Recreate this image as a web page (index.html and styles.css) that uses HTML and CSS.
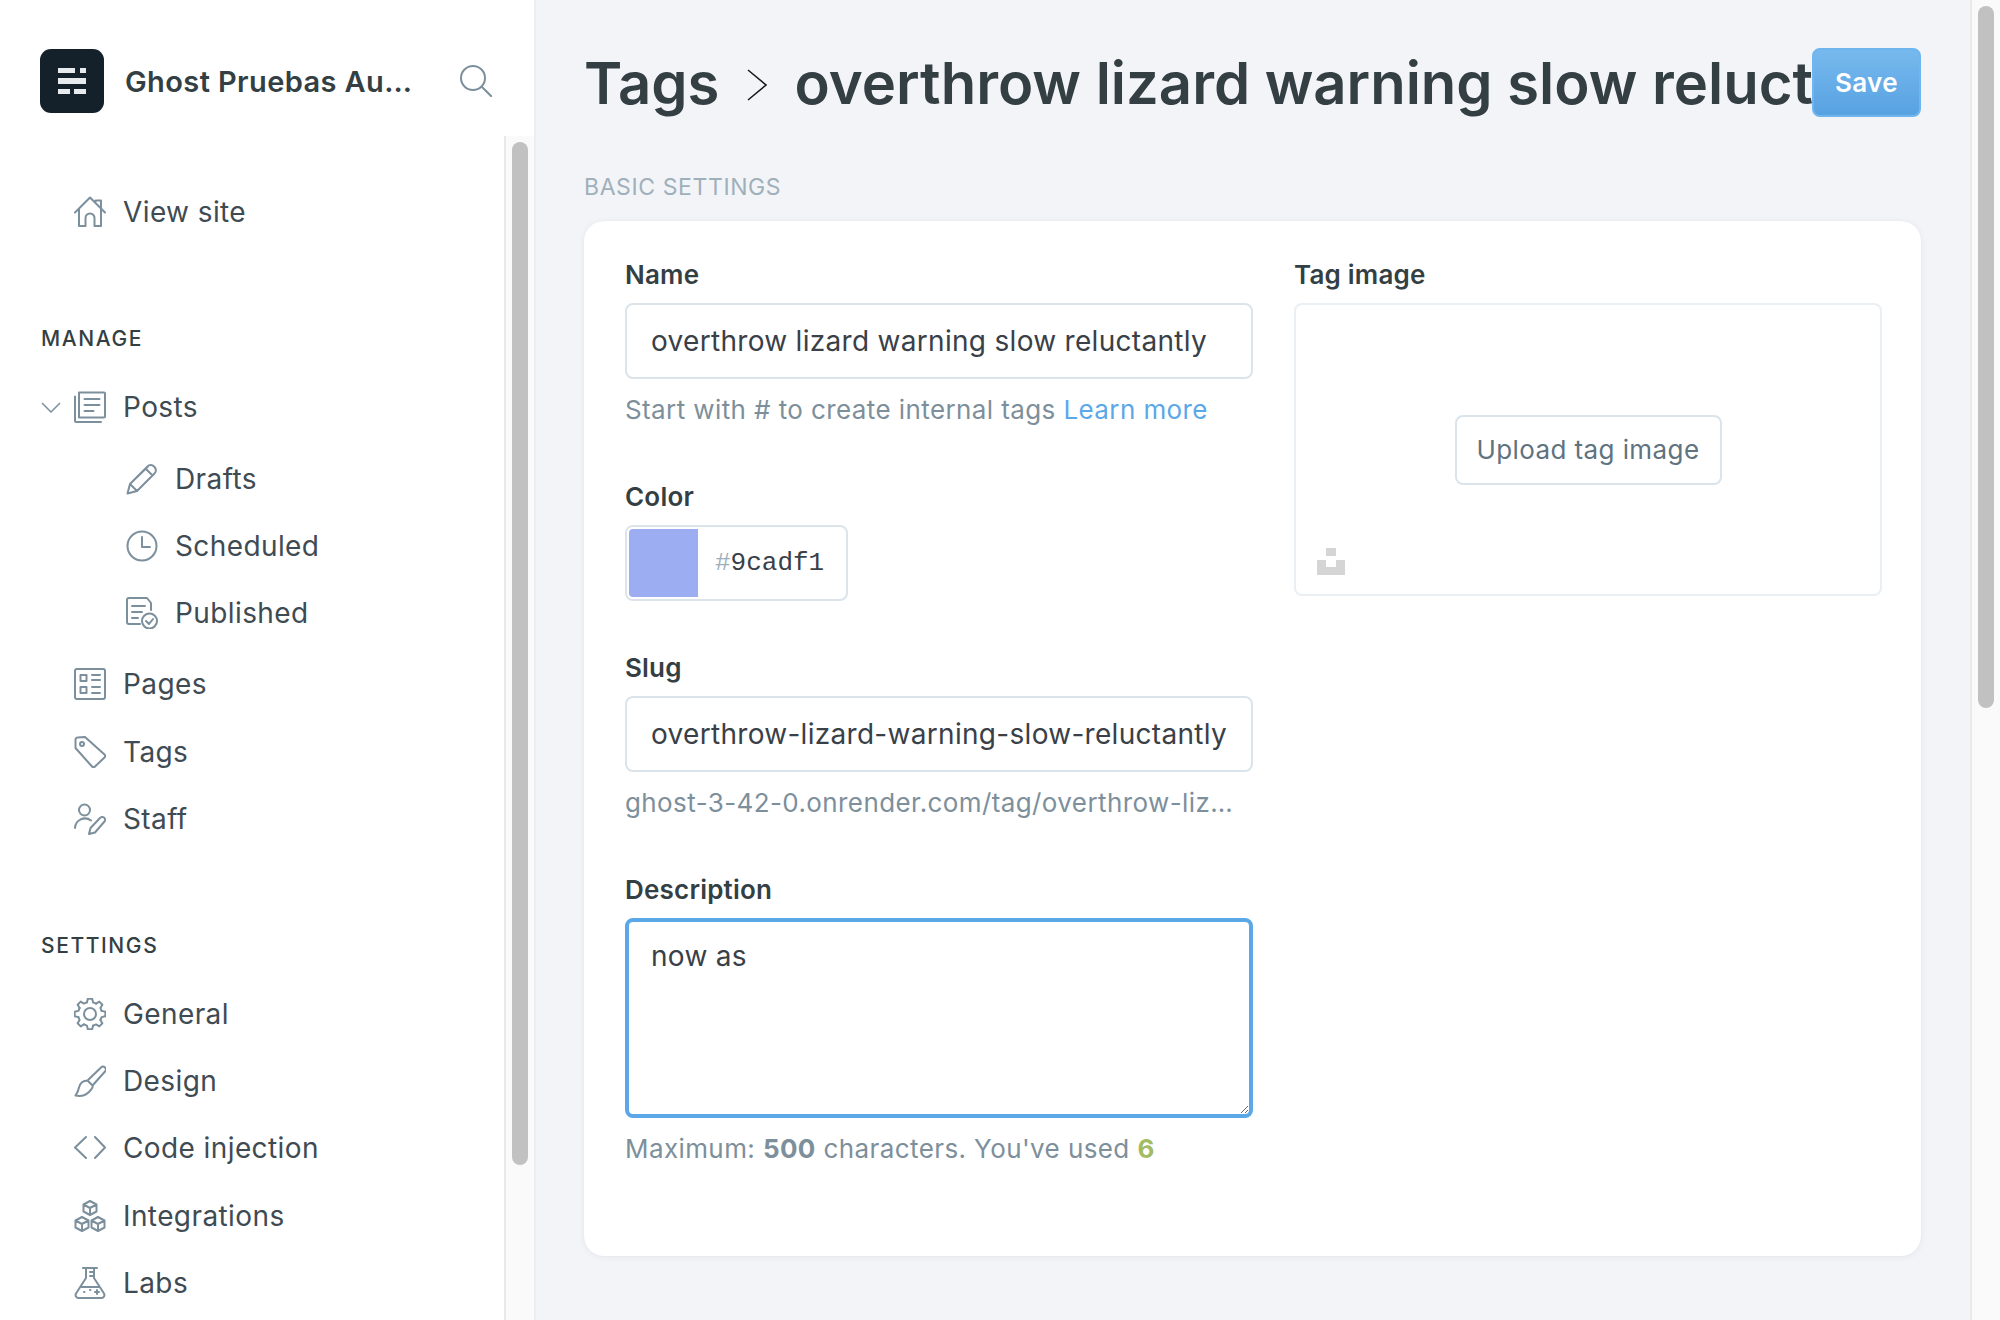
FILE: index.html
```html
<!DOCTYPE html>
<html lang="en">
<head>
<meta charset="utf-8">
<title>Tags - Ghost</title>
<link rel="stylesheet" href="styles.css">
</head>
<body>
<svg class="defs" width="0" height="0" aria-hidden="true">
  <defs>
    <path id="tooth" d="M12.9 4.4 13.84 .65h4.32l.94 3.75L22 5.6"/>
    <g id="cube"><path d="M0-7 6.5-3.5V3.5L0 7-6.5 3.5V-3.5zM-6.5-3.5 0 0 6.5-3.5M0 0V7"/></g>
  </defs>
</svg>
<div class="app">
  <aside class="sidebar">
    <header class="brand">
      <svg class="logo" viewBox="0 0 64 64"><rect width="64" height="64" rx="11" fill="#15212a"/><g fill="#e8ebee"><rect x="18" y="19" width="17" height="5"/><rect x="40" y="19" width="6" height="5"/><rect x="18" y="29" width="28" height="6"/><rect x="18" y="40" width="12" height="5"/><rect x="34" y="40" width="12" height="5"/></g></svg>
      <span class="brand-name">Ghost Pruebas Automatizadas</span>
      <svg class="icon search" viewBox="0 0 32 32"><circle cx="13" cy="13" r="12"/><path d="M22 22l10 10"/></svg>
    </header>
    <div class="side-body">
      <nav class="nav">
        <a class="item"><svg class="icon" viewBox="0 0 32 32"><path d="M1 16.500 16 1.500l15 15M5 13v17h6.500v-8a4.500 4.500 0 0 1 9 0v8H27V13M21.500 6V4.500H27v7"/></svg>View site</a>
        <h2 class="nav-head">Manage</h2>
        <div class="item has-toggle">
          <svg class="toggle" viewBox="0 0 20 11"><path d="M1 1l9 9 9-9"/></svg>
          <svg class="icon" viewBox="0 0 32 32"><path d="M5 1.500h25a1 1 0 0 1 1 1v23a1 1 0 0 1-1 1H5zM1 5.500V30a1 1 0 0 0 1 1h25M10.500 8h15M10.500 14h15M10.500 20h9"/></svg>Posts
        </div>
        <div class="subnav">
          <a class="item"><svg class="icon" viewBox="0 0 32 32"><path d="M1.500 30.500 4 21 21.500 3.500a4.500 4.500 0 0 1 6.500 0l.5.500a4.500 4.500 0 0 1 0 6.500L11 28zM4 21l7 7M19.500 5.500l7 7M7 18 22 3.500M14 25 28.500 10.500"/></svg>Drafts</a>
          <a class="item"><svg class="icon" viewBox="0 0 32 32"><circle cx="16" cy="16" r="14.500"/><path d="M16 7v10h8"/></svg>Scheduled</a>
          <a class="item"><svg class="icon" viewBox="0 0 32 32"><path d="M14 27H3a2 2 0 0 1-2-2V3a2 2 0 0 1 2-2h18l4 5v7M6 9h13M6 15h10M6 21h6"/><circle cx="23.500" cy="24" r="7.500"/><path d="M20 24l3 3 4-5"/></svg>Published</a>
        </div>
        <a class="item"><svg class="icon" viewBox="0 0 32 32"><rect x="1" y="1" width="30" height="30" rx="2"/><path d="M6.500 7h6v6h-6zM6.500 19h6v6h-6zM18 7h8M18 12h8M18 19h8M18 25h8"/></svg>Pages</a>
        <a class="item"><svg class="icon" viewBox="0 0 32 32"><path d="M1.500 3.500a2 2 0 0 1 2-2L11 1l19.500 17.500a2 2 0 0 1 0 3L21 30.500a2 2 0 0 1-3 0L1.500 12z"/><circle cx="8" cy="8" r="2"/></svg>Tags</a>
        <a class="item"><svg class="icon" viewBox="0 0 32 32"><circle cx="10.500" cy="7" r="5.500"/><path d="M1 25a10 10 0 0 1 16-7.500M15 31l1.500-6L26 15a2.500 2.500 0 0 1 4.500 3.500L21 29.500z"/></svg>Staff</a>
        <h2 class="nav-head">Settings</h2>
        <a class="item"><svg class="icon" viewBox="0 0 32 32"><use href="#tooth"/><use href="#tooth" transform="rotate(45 16 16)"/><use href="#tooth" transform="rotate(90 16 16)"/><use href="#tooth" transform="rotate(135 16 16)"/><use href="#tooth" transform="rotate(180 16 16)"/><use href="#tooth" transform="rotate(225 16 16)"/><use href="#tooth" transform="rotate(270 16 16)"/><use href="#tooth" transform="rotate(315 16 16)"/><circle cx="16" cy="16" r="6"/></svg>General</a>
        <a class="item"><svg class="icon" viewBox="0 0 32 32"><path d="M27 2.500a2.800 2.800 0 0 1 4 4L18.500 20.500l-5-5zM13.500 15.500c-5 0-7.500 3-8.500 7-.6 3-2 6-3.500 8 5 1 10.500-.5 13.500-3.500s4.500-5 3.500-7"/></svg>Design</a>
        <a class="item"><svg class="icon" viewBox="0 0 32 32"><path d="M12 5 1 15.500 12 26M21 5l10 10.500L21 26"/></svg>Code injection</a>
        <a class="item"><svg class="icon" viewBox="0 0 32 32"><use href="#cube" x="16" y="8"/><use href="#cube" x="8" y="24"/><use href="#cube" x="24" y="24"/></svg>Integrations</a>
        <a class="item"><svg class="icon" viewBox="0 0 32 32"><path d="M9 1h14M12 1v10L2 26.500A3 3 0 0 0 4.500 31h23a3 3 0 0 0 2.500-4.500L20 11V1M16 5h4M16 9h4M6.500 20h19M10 25h.5M16 23h.5M21 25h4M23 23v4"/></svg>Labs</a>
      </nav>
      <div class="track side-track"><div class="thumb side-thumb"></div></div>
    </div>
  </aside>
  <main class="main">
    <div class="canvas">
      <header class="page-head">
        <h1 class="title"><span>Tags</span><svg class="crumb" viewBox="0 0 20 32"><path d="M1 1l18 15L1 31"/></svg><span>overthrow lizard warning slow reluctantly</span></h1>
        <button class="save" type="button">Save</button>
      </header>
      <h3 class="section">Basic settings</h3>
      <section class="card">
        <div class="col-form">
          <label class="label">Name</label>
          <input class="field" type="text" value="overthrow lizard warning slow reluctantly">
          <p class="help">Start with # to create internal tags <a class="link">Learn more</a></p>
          <label class="label gap-color">Color</label>
          <div class="color">
            <span class="swatch"></span>
            <span class="hash">#</span><span class="hex">9cadf1</span>
          </div>
          <label class="label gap-slug">Slug</label>
          <input class="field" type="text" value="overthrow-lizard-warning-slow-reluctantly">
          <p class="help ellipsis">ghost-3-42-0.onrender.com/tag/overthrow-lizard-warning-slow-reluctantly</p>
          <label class="label gap-desc">Description</label>
          <textarea class="field area">now as</textarea>
          <p class="help count">Maximum: <b>500</b> characters. You've used <b class="used">6</b></p>
        </div>
        <div class="col-image">
          <label class="label">Tag image</label>
          <div class="dropzone">
            <button class="upload" type="button">Upload tag image</button>
            <svg class="unsplash" viewBox="0 0 28 27"><path d="M9 0h10v8H9zM0 12h9v7h10v-7h9v15H0z"/></svg>
          </div>
        </div>
      </section>
    </div>
    <div class="track main-track"><div class="thumb main-thumb"></div></div>
  </main>
</div>
</body>
</html>
```
FILE: styles.css
```css
* { box-sizing: border-box; }
html, body { margin: 0; height: 100%; overflow: hidden; }
body { font-family: Inter, "Liberation Sans", sans-serif; color: #394047; background: #f3f4f8; }
.defs { position: absolute; }
.app { display: flex; height: 1320px; }

.sidebar { width: 536px; flex: none; display: flex; flex-direction: column; background: #fff; border-right: 2px solid #eceef1; }
.brand { height: 136px; flex: none; display: flex; align-items: flex-start; padding: 49px 0 0 40px; }
.logo { width: 64px; height: 64px; flex: none; margin-right: 21px; }
.brand-name { width: 296px; margin-right: 39px; line-height: 66px; font-size: 29px; font-weight: 600; letter-spacing: .4px; color: #343f44; white-space: nowrap; overflow: hidden; text-overflow: ellipsis; }
.icon { width: 32px; height: 32px; flex: none; fill: none; stroke: #7c8f9c; stroke-width: 2; stroke-linejoin: round; stroke-linecap: round; }
.search { margin-top: 16px; }

.side-body { flex: 1; min-height: 0; display: flex; }
.nav { flex: 1; padding: 42px 0 0 41px; }
.nav-head { margin: 73.300px 0 14.300px; height: 40px; line-height: 40px; font-size: 21px; font-weight: 500; letter-spacing: 1.6px; text-transform: uppercase; color: #343f44; }
.item { height: 67.330px; display: flex; align-items: center; gap: 17px; padding-left: 33px; font-size: 28px; letter-spacing: .4px; color: #3f4b53; position: relative; }
.toggle { position: absolute; left: 0; top: 29px; width: 20px; height: 11px; fill: none; stroke: #7c8f9c; stroke-width: 1.500; }
.subnav { padding: 4.600px 0 3.700px 52px; }

.track { flex: none; width: 30px; background: #fafafa; border-left: 2px solid #e9e9e9; padding: 6px 6px 0; }
.thumb { width: 16px; background: #c1c1c1; border-radius: 8px; }
.side-thumb { height: 1023px; }
.main-thumb { height: 702px; }

.main { flex: 1; min-width: 0; display: flex; }
.canvas { flex: 1; min-width: 0; padding: 48px 49px 0 48px; }
.page-head { display: flex; align-items: center; height: 69px; }
.title { flex: 1; min-width: 0; margin: 0; display: flex; align-items: center; font-size: 58px; font-weight: 600; letter-spacing: 0; white-space: nowrap; overflow: hidden; color: #343f44; }
.crumb { width: 20px; height: 32px; flex: none; margin: 4px 27px 0 28px; fill: none; stroke: #15171a; stroke-width: 1.500; }
.save { flex: none; width: 109px; height: 69px; border: 2px solid #6fb5ee; border-radius: 8px; background: linear-gradient(#77b9ee, #58a2e2); color: #fff; font: 600 26px Inter, sans-serif; letter-spacing: .3px; padding: 0; }
.section { margin: 50px 0 14px; height: 40px; line-height: 40px; font-size: 23px; font-weight: 400; letter-spacing: .6px; text-transform: uppercase; color: #9fb0bb; }

.card { height: 1035px; display: grid; grid-template-columns: 628px 588px; column-gap: 41px; padding: 34px 41px 0; background: #fff; border-radius: 20px; box-shadow: 0 1px 6px rgba(40, 60, 80, .07), 0 0 1px rgba(40, 60, 80, .08); }
.col-form, .col-image { display: flex; flex-direction: column; align-items: flex-start; }
.label { display: block; height: 40px; line-height: 40px; margin-bottom: 8px; font-size: 26px; font-weight: 600; letter-spacing: .2px; color: #343f44; }
.field { display: block; width: 628px; height: 76px; padding: 0 24px; border: 2px solid #dae4ea; border-radius: 8px; background: #fff; outline: 0; font: 400 28px Inter, sans-serif; letter-spacing: .3px; color: #394047; }
.area { height: 200px; padding: 16px 24px; border: 4px solid #5ba8e8; line-height: 40px; padding-left: 22px; padding-top: 14px; resize: vertical; }
.help { margin: 12px 0 0; width: 628px; line-height: 38px; font-size: 26px; letter-spacing: .4px; color: #7d8f9b; }
.ellipsis { width: 610px; white-space: nowrap; overflow: hidden; text-overflow: ellipsis; }
.link { color: #5ba8e8; }
.count b { font-weight: 700; color: #7d8f9b; }
.count .used { color: #a3bb63; }
.gap-color { margin-top: 48px; }
.gap-slug { margin-top: 47px; }
.gap-desc { margin-top: 48px; }
.color { width: 223px; height: 76px; display: flex; align-items: center; border: 2px solid #dae4ea; border-radius: 8px; background: #fff; }
.swatch { width: 71px; height: 72px; flex: none; background: #9cadf1; border: 2px solid #fff; border-right: 0; border-radius: 6px 0 0 6px; box-shadow: 2px 0 0 #fff; }
.hash { margin-left: 12px; font-size: 26px; font-family: "Liberation Mono", monospace; color: #9fb0bb; padding-left: 2px; border-left: 3px solid transparent; }
.hex { font-family: "Liberation Mono", monospace; font-size: 26px; color: #394047; }

.dropzone { position: relative; width: 588px; height: 293px; display: flex; align-items: center; justify-content: center; border: 2px solid #e9eff3; border-radius: 8px; background: #fff; }
.upload { width: 267px; height: 70px; padding: 0; border: 2px solid #dae4ea; border-radius: 8px; background: #fff; color: #5f7380; font: 400 26px Inter, sans-serif; letter-spacing: .4px; }
.unsplash { position: absolute; left: 21px; bottom: 19px; width: 28px; height: 27px; fill: #d5d5d5; }
```
